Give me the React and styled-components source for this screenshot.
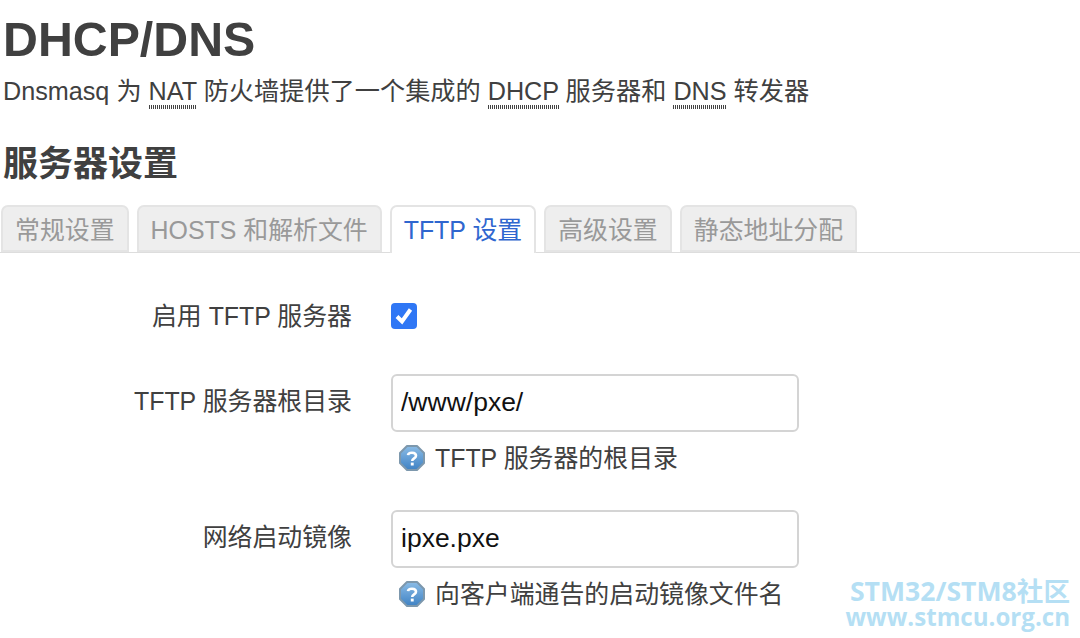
import React from 'react';
import styled, { createGlobalStyle } from 'styled-components';

const GlobalStyle = createGlobalStyle`
  html, body {
    margin: 0;
    padding: 0;
    background: #fff;
    overflow: hidden;
  }
  body {
    font-family: "Liberation Sans", "Noto Sans CJK SC", sans-serif;
    color: #404040;
  }
`;

const Page = styled.div`
  position: relative;
  width: 1080px;
  height: 638px;
  overflow: hidden;
`;

const Title = styled.h1`
  margin: 0;
  padding: 11px 0 0 3px;
  font-size: 48.3px;
  line-height: 56px;
  font-weight: 700;
  color: #404040;
`;

const Description = styled.p`
  margin: 0;
  padding: 6px 0 0 3px;
  font-size: 25.2px;
  line-height: 36px;
  color: #404040;
`;

const Abbr = styled.abbr`
  text-decoration: none;
  padding-bottom: 4px;
  background-image: repeating-linear-gradient(90deg, #444 0 1px, transparent 1px 2px);
  background-size: 100% 4px;
  background-position: left bottom;
  background-repeat: no-repeat;
`;

const Section = styled.h2`
  margin: 0;
  padding: 31px 0 0 3px;
  font-size: 35px;
  line-height: 48px;
  font-weight: 700;
  color: #404040;
`;

const Tabs = styled.ul`
  display: flex;
  gap: 8px;
  margin: 17px 0 0;
  padding: 0 0 0 1px;
  list-style: none;
  height: 47px;
  border-bottom: 1px solid #ddd;
`;

const Tab = styled.li`
  box-sizing: border-box;
  height: ${props => (props.active ? '48px' : '47px')};
  padding: 0 12px;
  border: 2px solid #e4e4e4;
  border-bottom: ${props => (props.active ? '0' : '2px solid #e4e4e4')};
  border-radius: 7px 7px 0 0;
  background: ${props => (props.active ? '#fff' : '#eee')};
  color: ${props => (props.active ? '#2f66cf' : '#999')};
  font-size: 24.9px;
  line-height: 47px;
  white-space: nowrap;
`;

const Form = styled.div`
  display: flex;
  flex-direction: column;
  padding-top: 46px;
`;

const Row = styled.div`
  display: grid;
  grid-template-columns: 352px 408px;
  column-gap: 39px;
  margin-bottom: ${props => props.gap || 0}px;
`;

const Label = styled.label`
  text-align: right;
  font-size: 24.9px;
  line-height: 35px;
  color: #404040;
  padding-top: ${props => props.top || 0}px;
`;

const Field = styled.div`
  display: flex;
  flex-direction: column;
`;

const Check = styled.span`
  display: flex;
  align-items: center;
  justify-content: center;
  width: 26px;
  height: 26px;
  margin-top: 4px;
  border-radius: 4px;
  background: #2f77f5;
`;

const Input = styled.input`
  box-sizing: border-box;
  width: 100%;
  height: 58px;
  padding: 0 8px 2px;
  border: 2px solid #d4d4d4;
  border-radius: 6px;
  background: #fff;
  font-family: inherit;
  font-size: 26.5px;
  color: #111;
  outline: 0;
`;

const Help = styled.div`
  display: flex;
  align-items: center;
  gap: 9px;
  height: 48px;
  padding-left: 7px;
  font-size: 24.9px;
  color: #404040;
`;

const HelpSvg = styled.svg`
  flex: none;
  margin-top: 4px;
`;

const Watermark = styled.div`
  position: absolute;
  right: 10px;
  bottom: 9px;
  text-align: right;
  color: #b5dff4;
  font-weight: 700;
  line-height: 25px;
  font-family: "Open Sans", "Noto Sans CJK SC", sans-serif;
`;

const MarkTop = styled.div`
  font-size: 26.6px;
`;

const MarkBottom = styled.div`
  font-size: 24.1px;
`;

const CheckMark = () => (
  <svg width="20" height="20" viewBox="0 0 20 20" fill="none">
    <path d="M3 10.5 L8 15.5 L16.5 3.5" stroke="#fff" strokeWidth="4" />
  </svg>
);

const HelpIcon = () => (
  <HelpSvg width="28" height="28" viewBox="0 0 28 28">
    <defs>
      <linearGradient id="helpFill" x1="0" y1="0" x2="0" y2="1">
        <stop offset="0" stopColor="#8bbce6" />
        <stop offset="1" stopColor="#3f82c4" />
      </linearGradient>
    </defs>
    <path
      d="M9 2 H19 L26 9 V19 L19 26 H9 L2 19 V9 Z"
      fill="url(#helpFill)"
      stroke="#7d98ad"
      strokeWidth="2"
      strokeLinejoin="round"
    />
    <path
      d="M10 11.2 C10.4 8 18 7.8 18 11.8 C18 14.4 14.2 14.4 14.2 17"
      fill="none"
      stroke="#fff"
      strokeWidth="2.6"
    />
    <rect x="12.8" y="18.6" width="2.9" height="2.9" fill="#fff" />
  </HelpSvg>
);

const tabs = ['常规设置', 'HOSTS 和解析文件', 'TFTP 设置', '高级设置', '静态地址分配'];

export default function App() {
  return (
    <Page>
      <GlobalStyle />
      <Title>DHCP/DNS</Title>
      <Description>
        Dnsmasq 为 <Abbr>NAT</Abbr> 防火墙提供了一个集成的 <Abbr>DHCP</Abbr> 服务器和 <Abbr>DNS</Abbr> 转发器
      </Description>
      <Section>服务器设置</Section>
      <Tabs>
        {tabs.map(name => (
          <Tab key={name} active={name === 'TFTP 设置'}>
            {name}
          </Tab>
        ))}
      </Tabs>
      <Form>
        <Row gap={40}>
          <Label>启用 TFTP 服务器</Label>
          <Field>
            <Check>
              <CheckMark />
            </Check>
          </Field>
        </Row>
        <Row gap={30}>
          <Label top={10}>TFTP 服务器根目录</Label>
          <Field>
            <Input defaultValue="/www/pxe/" readOnly />
            <Help>
              <HelpIcon />
              TFTP 服务器的根目录
            </Help>
          </Field>
        </Row>
        <Row>
          <Label top={10}>网络启动镜像</Label>
          <Field>
            <Input defaultValue="ipxe.pxe" readOnly />
            <Help>
              <HelpIcon />
              向客户端通告的启动镜像文件名
            </Help>
          </Field>
        </Row>
      </Form>
      <Watermark>
        <MarkTop>STM32/STM8社区</MarkTop>
        <MarkBottom>www.stmcu.org.cn</MarkBottom>
      </Watermark>
    </Page>
  );
}
